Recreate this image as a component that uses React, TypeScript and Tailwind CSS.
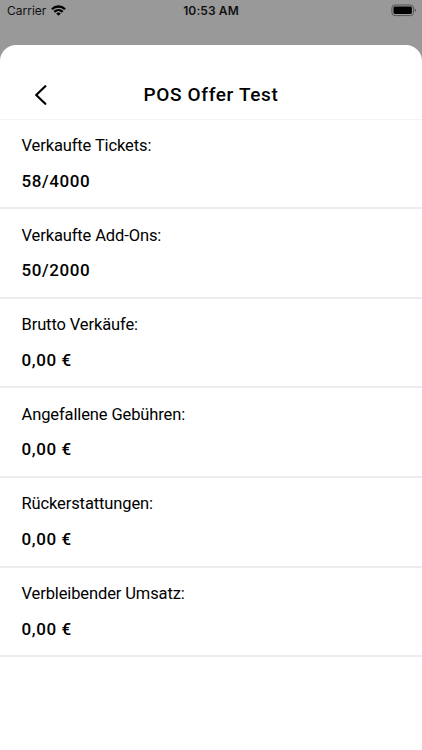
const stats = [
  { label: "Verkaufte Tickets:", value: "58/4000" },
  { label: "Verkaufte Add-Ons:", value: "50/2000" },
  { label: "Brutto Verkäufe:", value: "0,00 €" },
  { label: "Angefallene Gebühren:", value: "0,00 €" },
  { label: "Rückerstattungen:", value: "0,00 €" },
  { label: "Verbleibender Umsatz:", value: "0,00 €" },
]

function StatusBar() {
  return (
    <div className="grid h-[45px] grid-cols-3 items-start px-[7px] pt-[3px] font-['Inter',sans-serif] text-[12px] leading-4 text-[#111]">
      <div className="flex items-center gap-[5px]">
        <span>Carrier</span>
        <svg className="-mt-px" width="15" height="11" viewBox="0 0 15 11" fill="none" stroke="#000" strokeWidth="2.3">
          <path d="M0.9 4.2C4.6 0.6 10.4 0.6 14.1 4.2" />
          <path d="M3.3 6.8C5.7 4.5 9.3 4.5 11.7 6.8" />
          <path d="M7.5 10.8L5.2 8.5C6.5 7.3 8.5 7.3 9.8 8.5Z" fill="#000" stroke="none" />
        </svg>
      </div>
      <span className="text-center font-semibold tracking-[0.1px]">10:53 AM</span>
      <svg className="mt-[1px] -mr-[2px] ml-auto" width="26" height="13" viewBox="0 0 26 13">
        <rect x="0.9" y="1" width="21.6" height="10.6" rx="3" fill="none" stroke="#555" />
        <rect x="2.5" y="2.6" width="18.4" height="7.4" rx="1.4" fill="#000" />
        <path d="M23.8 4.5C25.4 5 25.4 7.6 23.8 8.1Z" fill="#555" />
      </svg>
    </div>
  )
}

function Header() {
  return (
    <header className="grid h-[74.6px] grid-cols-[60px_1fr_60px] items-center border-b border-[#f3f3f3] pt-[26px]">
      <button aria-label="Zurück" className="pl-[34px]">
        <svg width="14" height="20" viewBox="0 0 14 20" fill="none" stroke="#000" strokeWidth="2.2" strokeLinecap="round" strokeLinejoin="round">
          <path d="M11.3 1.2L2.2 10L11.3 18.8" />
        </svg>
      </button>
      <h1 className="text-center text-[19px] leading-6 font-medium tracking-[0.65px]">POS Offer Test</h1>
    </header>
  )
}

export default function App() {
  return (
    <div className="flex h-[750px] w-[422px] flex-col overflow-hidden bg-[#999] font-['Roboto',sans-serif] text-black">
      <StatusBar />
      <main className="flex-1 rounded-t-[16px] bg-white">
        <Header />
        <ul>
          {stats.map((stat) => (
            <li key={stat.label} className="h-[89.6px] border-b-2 border-[#ededef] px-[21.5px] pt-[14.5px]">
              <p className="text-[16.5px] leading-6 tracking-[-0.12px]">{stat.label}</p>
              <p className="mt-[10.6px] text-[17px] leading-6 font-medium tracking-[0.6px]">{stat.value}</p>
            </li>
          ))}
        </ul>
      </main>
    </div>
  )
}
